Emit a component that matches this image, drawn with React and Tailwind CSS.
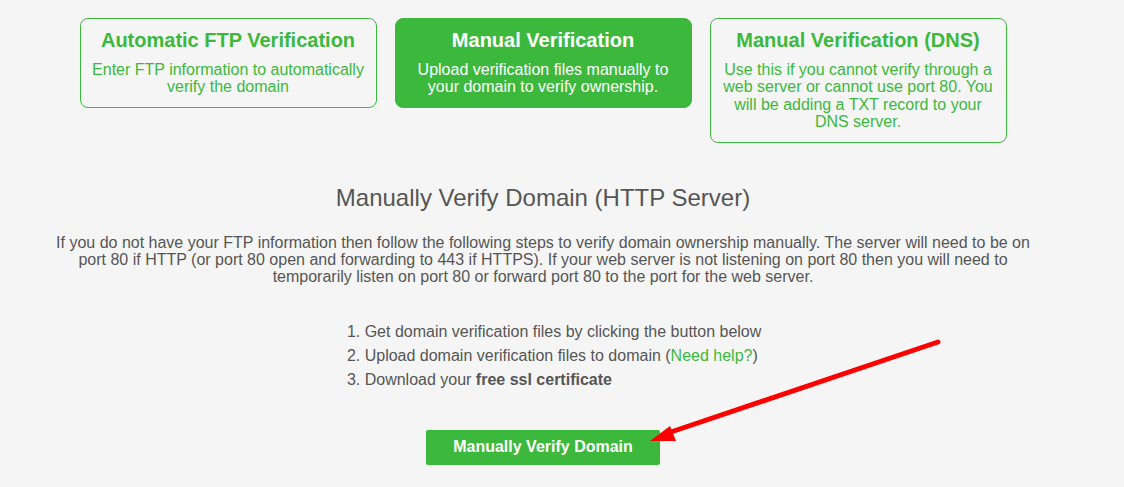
import React from "react";

const cards = [
  {
    title: "Automatic FTP Verification",
    text: "Enter FTP information to automatically verify the domain",
    active: false,
  },
  {
    title: "Manual Verification",
    text: "Upload verification files manually to your domain to verify ownership.",
    active: true,
  },
  {
    title: "Manual Verification (DNS)",
    text: "Use this if you cannot verify through a web server or cannot use port 80. You will be adding a TXT record to your DNS server.",
    active: false,
  },
];

export default function App() {
  return (
    <div
      className="relative min-h-screen bg-[#f5f5f5] text-[#555555]"
      style={{ fontFamily: '"Liberation Sans", Arial, sans-serif' }}
    >
      <div className="ml-[48px] w-[990px] pt-[18px] text-center">
        {/* Method cards */}
        <div className="flex items-start justify-center gap-[18px]">
          {cards.map((c) => (
            <div
              key={c.title}
              className={
                c.active
                  ? "w-[297px] rounded-lg border border-[#3cb93c] bg-[#3cb93c] px-2 pt-[7px] pb-[11px] text-white"
                  : "w-[297px] rounded-lg border border-[#3cb93c] px-2 pt-[7px] pb-[11px] text-[#3cb93c]"
              }
            >
              <h3 className="mb-[7px] text-[20px] font-bold leading-[28px]">{c.title}</h3>
              <p className="text-[16px] leading-[17.4px]">{c.text}</p>
            </div>
          ))}
        </div>

        <h2 className="mt-[41px] text-[24px] leading-[28px]">Manually Verify Domain (HTTP Server)</h2>

        <p className="mt-[22px] text-[16px] leading-[17px]">
          If you do not have your FTP information then follow the following steps to verify domain ownership
          manually. The server will need to be on port 80 if HTTP (or port 80 open and forwarding to 443 if HTTPS).
          If your web server is not listening on port 80 then you will need to temporarily listen on port 80 or
          forward port 80 to the port for the web server.
        </p>

        <ol className="mt-[35px] inline-block list-decimal pl-10 text-left text-[16px] leading-[24px]">
          <li>Get domain verification files by clicking the button below</li>
          <li>
            Upload domain verification files to domain (<span className="text-[#3cb93c]">Need help?</span>)
          </li>
          <li>
            Download your <b>free ssl certificate</b>
          </li>
        </ol>

        <div className="mt-[38px]">
          <button className="h-[35px] w-[234px] rounded-[2px] bg-[#3cb93c] text-[16px] font-bold text-white">
            Manually Verify Domain
          </button>
        </div>
      </div>

      {/* red annotation arrow */}
      <svg className="pointer-events-none absolute left-0 top-0" width="1124" height="487">
        <line x1="938" y1="342" x2="668" y2="433" stroke="#ff0000" strokeWidth="5" strokeLinecap="round" />
        <polygon points="650,441 670,426 676,441" fill="#ff0000" />
      </svg>
    </div>
  );
}
